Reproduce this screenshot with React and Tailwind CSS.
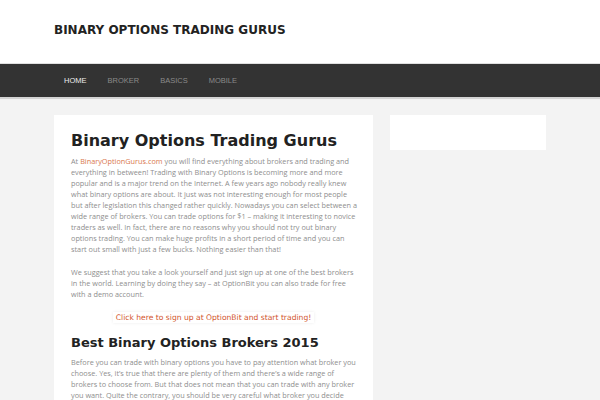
import React from 'react';

const NAV = ['Home', 'Broker', 'Basics', 'Mobile'];

const INTRO = [
  'everything in between! Trading with Binary Options is becoming more and more',
  'popular and is a major trend on the Internet. A few years ago nobody really knew',
  'what binary options are about. It just was not interesting enough for most people',
  'but after legislation this changed rather quickly. Nowadays you can select between a',
  'wide range of brokers. You can trade options for $1 – making it interesting to novice',
  'traders as well. In fact, there are no reasons why you should not try out binary',
  'options trading. You can make huge profits in a short period of time and you can',
  'start out small with just a few bucks. Nothing easier than that!',
];

const SUGGEST = [
  'We suggest that you take a look yourself and just sign up at one of the best brokers',
  'in the world. Learning by doing they say – at OptionBit you can also trade for free',
  'with a demo account.',
];

const BROKERS = [
  'Before you can trade with binary options you have to pay attention what broker you',
  'choose. Yes, it’s true that there are plenty of them and there’s a wide range of',
  'brokers to choose from. But that does not mean that you can trade with any broker',
  'you want. Quite the contrary, you should be very careful what broker you decide',
  'to use.',
];

function Lines({ lines }) {
  return lines.map((l) => (
    <span key={l} className="block whitespace-nowrap">
      {l}
    </span>
  ));
}

export default function App() {
  return (
    <div className="min-h-[400px] bg-[#f3f3f3] font-['Open_Sans',sans-serif]">
      {/* Header */}
      <header className="bg-white h-[63px] pt-[24px]">
        <h1 className="ml-[54px] font-['DejaVu_Sans',sans-serif] font-bold text-[12px] text-[#222] leading-[12px]">
          BINARY OPTIONS TRADING GURUS
        </h1>
      </header>

      {/* Navigation */}
      <nav className="bg-[#333] h-[36px] border-t border-[#e0e0e0] border-b-2 border-b-[#d4d4d4]">
        <ul className="ml-[53.5px] flex h-full items-center font-['Liberation_Sans',sans-serif] text-[7.5px] uppercase">
          {NAV.map((item, i) => (
            <li
              key={item}
              className={`px-[10.5px] ${i === 0 ? 'text-[#eee]' : 'text-[#8a8a8a]'}`}
            >
              {item}
            </li>
          ))}
        </ul>
      </nav>

      {/* Main */}
      <div className="ml-[54px] pt-[16px] flex gap-[17px] items-start">
        <main className="w-[319px] bg-white px-[17px] pt-[16px] pb-4">
          <h2 className="font-['DejaVu_Sans',sans-serif] font-bold text-[16px] text-[#222] leading-[20px]">
            Binary Options Trading Gurus
          </h2>
          <div className="mt-[5px] text-[7.3px] leading-[11px] text-[#8e8e8e]">
            <p>
              <span className="block whitespace-nowrap">
                At <span className="text-[#d9774e]">BinaryOptionGurus.com</span> you will find everything about brokers and trading and
              </span>
              <Lines lines={INTRO} />
            </p>
            <p className="mt-[12px]">
              <Lines lines={SUGGEST} />
            </p>
            <p className="mt-[12px] text-center">
              <span className="font-['DejaVu_Sans',sans-serif] text-[7.6px] text-[#d2552e] px-[3px] py-[1px] shadow-[0_0_3px_rgba(0,0,0,0.08)]">
                Click here to sign up at OptionBit and start trading!
              </span>
            </p>
          </div>
          <h2 className="mt-[11px] font-['DejaVu_Sans',sans-serif] font-bold text-[13px] text-[#222] leading-[17px]">
            Best Binary Options Brokers 2015
          </h2>
          <p className="mt-[6px] text-[7.3px] leading-[11px] text-[#8e8e8e]">
            <Lines lines={BROKERS} />
          </p>
        </main>

        <aside className="w-[156px] h-[35px] bg-white" />
      </div>
    </div>
  );
}
